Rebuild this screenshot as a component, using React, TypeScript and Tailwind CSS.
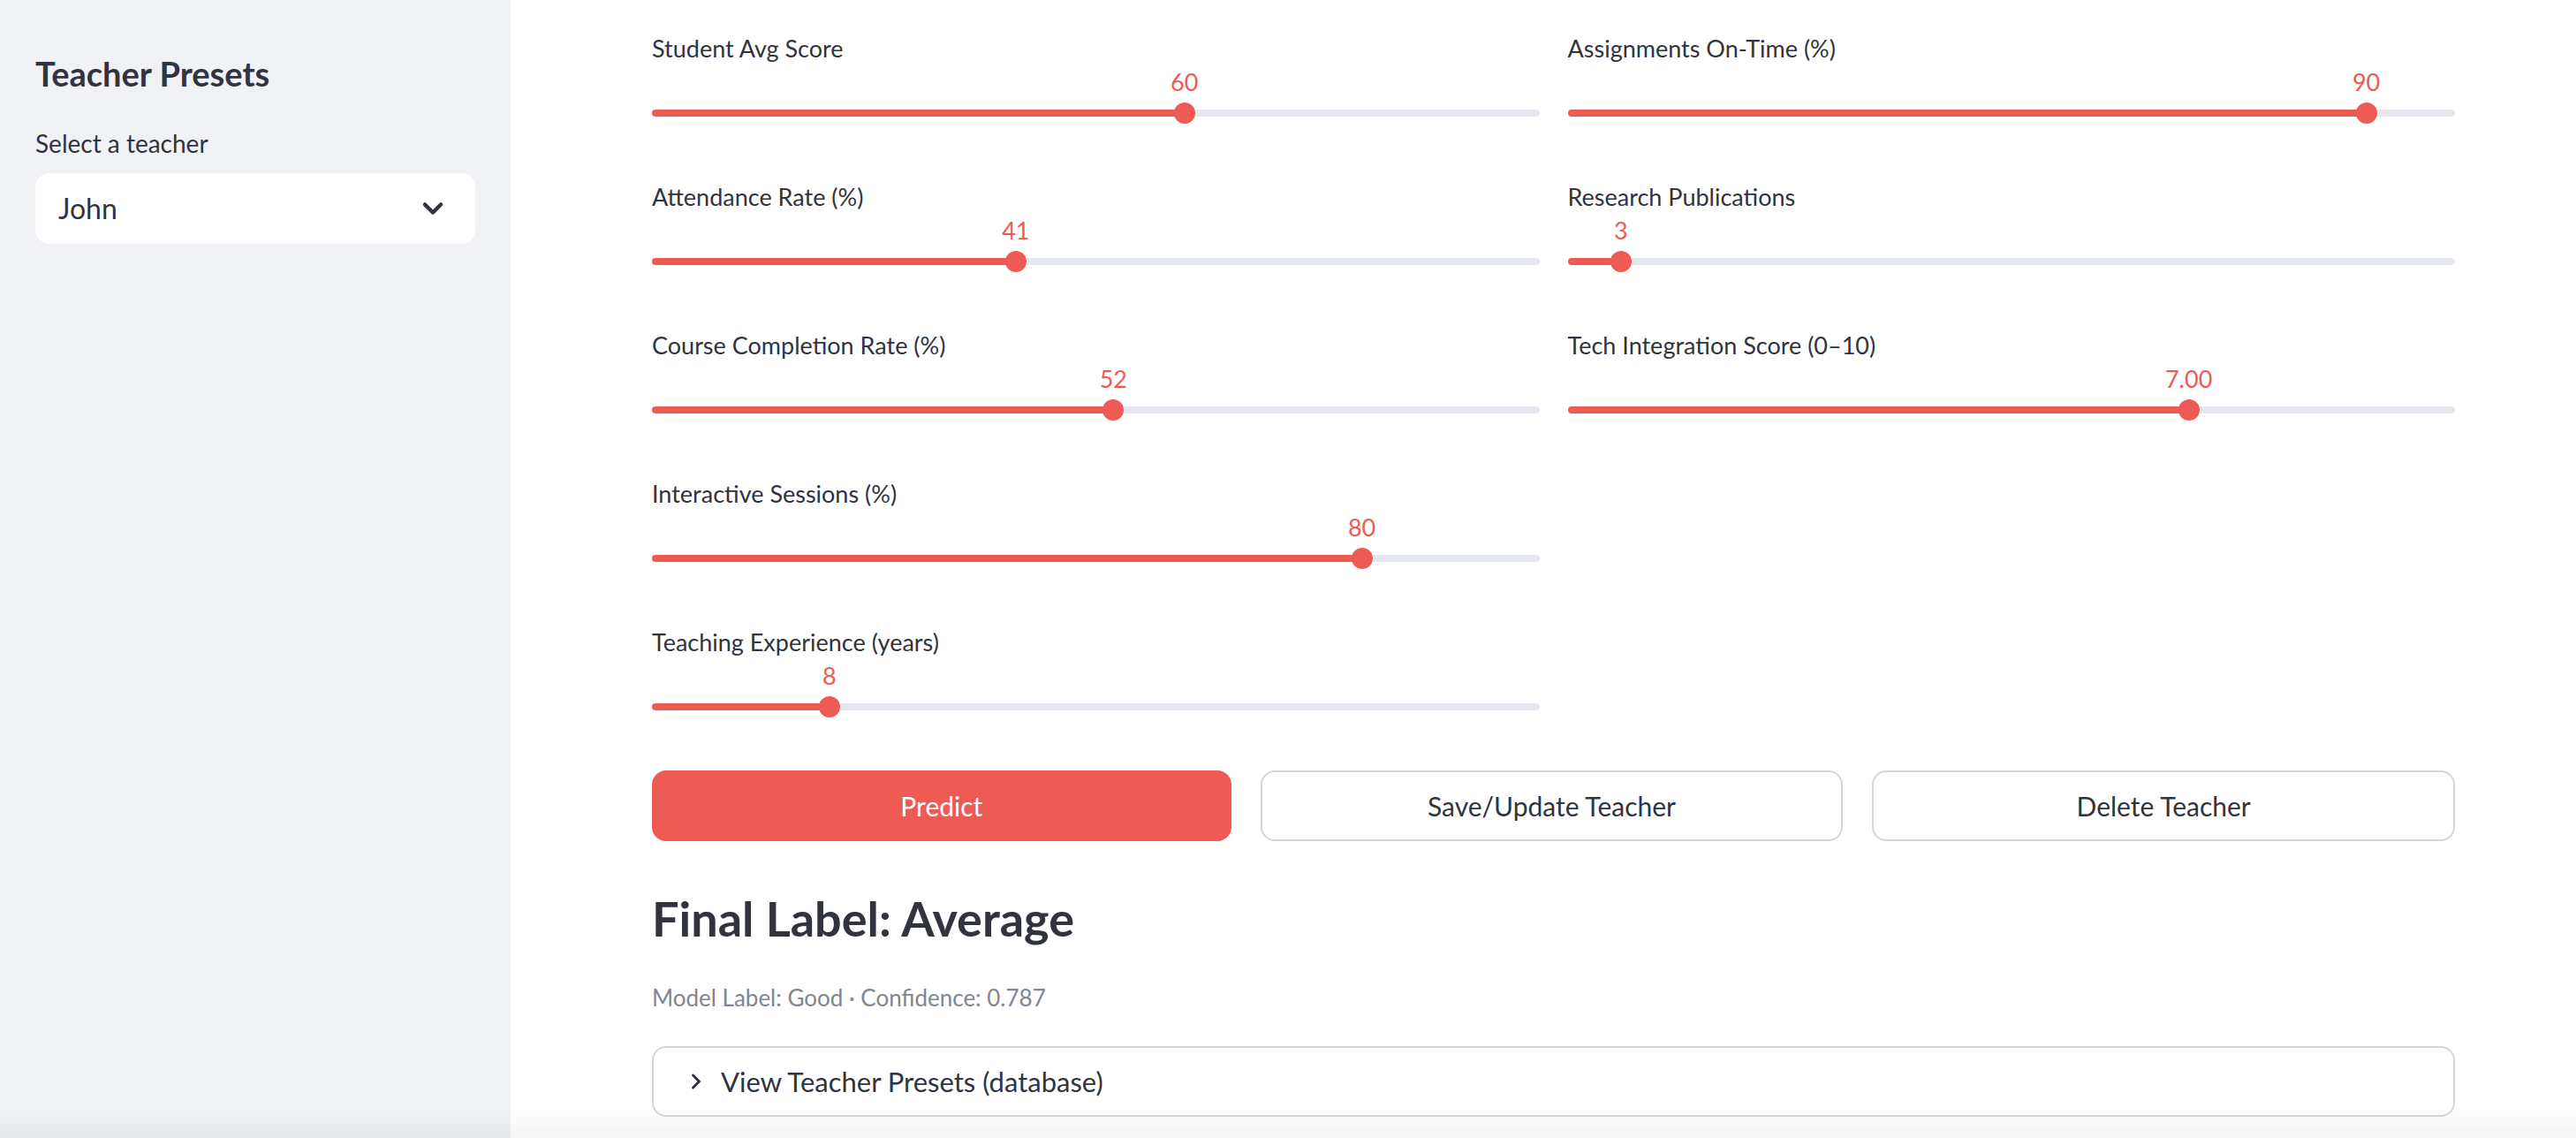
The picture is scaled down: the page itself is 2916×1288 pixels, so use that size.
import { ChevronDown, ChevronRight } from 'lucide-react';

const left = [
  { label: 'Student Avg Score', value: 60, min: 0, max: 100, text: '60' },
  { label: 'Attendance Rate (%)', value: 41, min: 0, max: 100, text: '41' },
  { label: 'Course Completion Rate (%)', value: 52, min: 0, max: 100, text: '52' },
  { label: 'Interactive Sessions (%)', value: 80, min: 0, max: 100, text: '80' },
  { label: 'Teaching Experience (years)', value: 8, min: 0, max: 40, text: '8' }
];

const right = [
  { label: 'Assignments On-Time (%)', value: 90, min: 0, max: 100, text: '90' },
  { label: 'Research Publications', value: 3, min: 0, max: 50, text: '3' },
  { label: 'Tech Integration Score (0–10)', value: 7, min: 0, max: 10, text: '7.00' }
];

type SliderProps = { label: string; value: number; min: number; max: number; text: string };

function Slider({ label, value, min, max, text }: SliderProps) {
  const pct = ((value - min) / (max - min)) * 100;

  return (
    <div className="flex h-[168px] flex-col">
      <div className="h-[44px] text-[27px] leading-[42px] text-[#31333f]">{label}</div>
      <div className="relative h-[38px]">
        <span
          className="absolute top-0 -translate-x-1/2 text-[27px] leading-[30px] text-[#ed5b54]"
          style={{ left: `${pct}%` }}
        >
          {text}
        </span>
      </div>
      <div className="relative flex h-[24px] items-center">
        <div className="h-[8px] w-full rounded-full bg-[#e5e7ef]">
          <div className="h-full rounded-full bg-[#ed5b54]" style={{ width: `${pct}%` }} />
        </div>
        <div
          className="absolute top-0 h-[24px] w-[24px] -translate-x-1/2 rounded-full bg-[#ed5b54]"
          style={{ left: `${pct}%` }}
        />
      </div>
    </div>
  );
}

export default function App() {
  return (
    <div className="relative flex h-[1288px] w-full overflow-hidden bg-white font-['Lato',sans-serif] text-[#31333f]">
      <aside className="w-[578px] shrink-0 bg-[#f0f2f6] px-[40px] pt-[58px]">
        <h2 className="text-[38px] font-bold leading-[50px]">Teacher Presets</h2>
        <p className="mt-[34px] text-[28px] leading-[40px]">Select a teacher</p>
        <div className="mt-[14px] flex h-[80px] w-[498px] items-center justify-between rounded-[16px] bg-white pl-[26px] pr-[30px]">
          <span className="text-[32px]">John</span>
          <ChevronDown size={36} strokeWidth={3} className="text-[#31333f]" />
        </div>
      </aside>

      <main className="flex-1 pl-[160px] pt-[34px]">
        <div className="w-[2041px]">
          <div className="grid grid-cols-2 gap-x-[32px]">
            <div>
              {left.map((s) => (
                <Slider key={s.label} {...s} />
              ))}
            </div>
            <div>
              {right.map((s) => (
                <Slider key={s.label} {...s} />
              ))}
            </div>
          </div>

          <div className="-mt-[2px] flex gap-[33px]">
            <button className="h-[80px] flex-1 rounded-[16px] bg-[#ed5b54] text-[30px] text-white">Predict</button>
            <button className="h-[80px] flex-1 rounded-[16px] border-2 border-[#d6d6d9] bg-white text-[30px]">
              Save/Update Teacher
            </button>
            <button className="h-[80px] flex-1 rounded-[16px] border-2 border-[#d6d6d9] bg-white text-[30px]">
              Delete Teacher
            </button>
          </div>

          <h3 className="mt-[54px] text-[54px] font-bold leading-[68px]">Final Label: Average</h3>
          <p className="mt-[33px] text-[26px] leading-[44px] text-[#83858f]">Model Label: Good · Confidence: 0.787</p>

          <div className="mt-[33px] flex h-[80px] items-center rounded-[16px] border-2 border-[#d6d6d9] bg-white pl-[34px]">
            <ChevronRight size={28} strokeWidth={2.5} className="text-[#31333f]" />
            <span className="ml-[14px] text-[31px]">View Teacher Presets (database)</span>
          </div>
        </div>
      </main>

      <div className="pointer-events-none absolute inset-x-0 bottom-0 h-[36px] bg-linear-to-b from-transparent to-black/[0.04]" />
    </div>
  );
}
